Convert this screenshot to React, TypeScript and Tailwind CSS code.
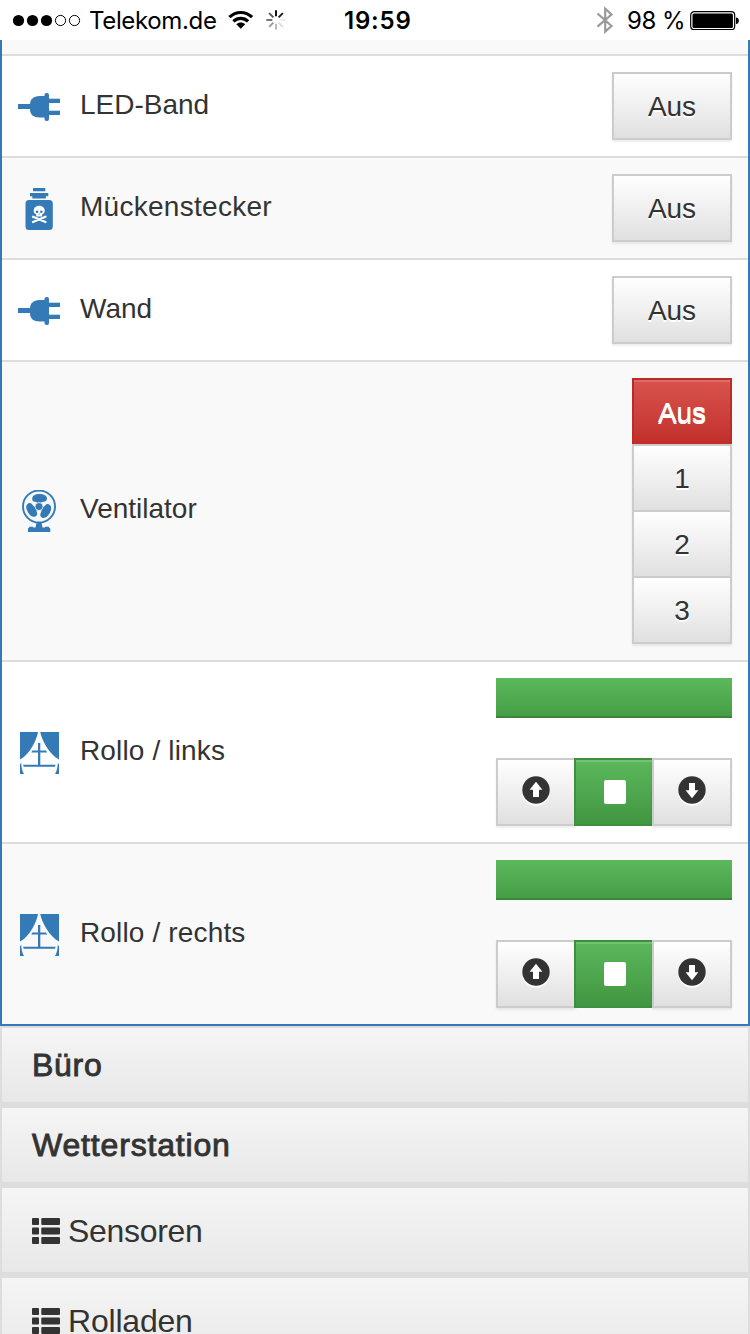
import type { ReactNode } from "react";

const helv = "font-['Liberation_Sans',Arial,sans-serif]";

function PlugIcon() {
  return (
    <svg viewBox="0 0 42 42" className="size-[42px] shrink-0 fill-[#337ab7]">
      <rect x="0" y="18" width="14" height="5" />
      <path d="M27 10H21.500C15.500 10 12 13.500 12 18.500V23.500C12 28.500 15.500 31.500 21.500 31.500H27Z" />
      <rect x="26.500" y="7" width="4.500" height="28" rx="2" />
      <rect x="30" y="12.700" width="12" height="4.300" />
      <rect x="30" y="24.700" width="12" height="4.300" />
    </svg>
  );
}

function PoisonIcon() {
  return (
    <svg viewBox="0 0 42 42" className="size-[42px] shrink-0 fill-[#337ab7]">
      <rect x="15" y="0" width="12.300" height="3.300" rx=".5" />
      <path d="M12 5H30.300V8.300H27.800V10.500H14.300V8.300H12Z" />
      <rect x="7.500" y="12" width="27.300" height="30" rx="3.500" />
      <g stroke="#fff" strokeWidth="2.300" strokeLinecap="round">
        <path d="M15 28.700L27.500 34M27.500 28.700L15 34" />
      </g>
      <path fill="#fff" d="M21.200 17.800C17.500 17.800 15.700 20.200 15.700 22.800C15.700 24.700 16.500 25.700 18.200 26.300V28.500H24.200V26.300C25.900 25.700 26.700 24.700 26.700 22.800C26.700 20.200 24.900 17.800 21.200 17.800Z" />
      <circle cx="19.100" cy="23.800" r="1.300" />
      <circle cx="23.300" cy="23.800" r="1.300" />
      <path d="M21.200 25L21.900 26.500H20.500Z" />
    </svg>
  );
}

function FanIcon() {
  const blade = "M19.500 14C19.300 12.300 18.600 12.100 17 11.800C15 11.400 13.900 10.200 14.200 8.200C14.600 5.200 18 4 21.500 4C25.800 4 29 5.600 29 8.600C29 10.800 27.500 11.600 25.500 11.800C23.500 12 22.700 12.500 22.500 14Z";
  return (
    <svg viewBox="0 0 42 42" className="size-[42px] shrink-0 fill-[#337ab7]">
      <circle cx="21" cy="16.500" r="16" fill="none" stroke="#337ab7" strokeWidth="1.900" />
      <path d={blade} />
      <path d={blade} transform="rotate(120 21 16.500)" />
      <path d={blade} transform="rotate(240 21 16.500)" />
      <circle cx="21" cy="16.500" r="4" stroke="#f9f9f9" strokeWidth=".8" />
      <path d="M18.500 32.500H23.500L24.500 37.500H27V36.800H31V37.800Q32.300 37.800 32.300 39V42H10V39Q10 37.800 11.200 37.800V36.800H15V37.500H17.500Z" />
    </svg>
  );
}

function CurtainIcon() {
  return (
    <svg viewBox="0 0 42 42" className="size-[42px] shrink-0 fill-[#337ab7]">
      <path d="M2 0H20C19 7 12 22.500 2 27.500Z" />
      <path d="M41 0H22.300C23.300 7 31 22.500 41 27.500Z" />
      <path d="M20 11H22.300V18.500H28L29.200 20.500H22.300V32.800H37.600L37 34.800H5.800L5 32.800H20V20.500H13.200L14.400 18.500H20Z" />
      <path d="M2 32C3.500 31.500 4 30.500 3.200 30.500C3.400 35.500 4 38.500 6 42H2ZM41 32C39.500 31.500 39 30.500 39.800 30.500C39.600 35.500 39 38.500 37 42H41Z" />
    </svg>
  );
}

function ArrowIcon({ down = false }: { down?: boolean }) {
  return (
    <svg viewBox="0 0 28 30" className="h-[30px] w-7">
      <circle cx="14" cy="16" r="13.700" fill="#fff" />
      <circle cx="14" cy="14" r="13.700" fill="#333" />
      <path
        fill="#fff"
        d="M14 5.800L20.400 13.800H17V21H11V13.800H7.600Z"
        transform={down ? "rotate(180 14 14)" : undefined}
      />
    </svg>
  );
}

function ListIcon() {
  return (
    <svg viewBox="0 0 28 26" className="h-[26px] w-7 shrink-0 fill-[#333]">
      {[0, 9.5, 19].map((y) => (
        <g key={y}>
          <rect x="0" y={y} width="7" height="7" rx="1" />
          <rect x="9.300" y={y} width="18.700" height="7" rx="1" />
        </g>
      ))}
    </svg>
  );
}

const plain =
  "border-2 border-[#ccc] bg-linear-to-b from-white to-[#e0e0e0] text-[#333] [text-shadow:0_2px_0_#fff] shadow-[inset_0_2px_0_rgba(255,255,255,0.15),0_2px_2px_rgba(0,0,0,0.075)]";

function AusButton() {
  return (
    <button className={`h-[68px] w-[120px] text-[28px] leading-[40px] tracking-[-0.1px] ${plain}`}>
      <span className="block pt-[1px]">Aus</span>
    </button>
  );
}

function SpeedButtons() {
  return (
    <div className="flex w-[100px] flex-col text-[28px] leading-[40px]">
      <button className="h-[68px] border-2 border-[#b92c28] bg-linear-to-b from-[#d9534f] to-[#c12e2a] text-white [text-shadow:0_2px_0_#fff] shadow-[inset_0_2px_0_rgba(255,255,255,0.15)]">
        <span className="block pt-[2px]">Aus</span>
      </button>
      {["1", "2", "3"].map((n) => (
        <button key={n} className={`-mt-0.5 h-[68px] ${plain}`}>
          <span className="block pt-[2px]">{n}</span>
        </button>
      ))}
    </div>
  );
}

function ShutterControl() {
  return (
    <div className="flex w-[236px] flex-col gap-10">
      <div className="h-10 bg-linear-to-b from-[#5cb85c] to-[#449d44] shadow-[inset_0_-2px_0_rgba(0,0,0,0.15)]" />
      <div className="flex">
        <button className={`flex h-[68px] w-20 justify-center pt-4 ${plain}`}>
          <ArrowIcon />
        </button>
        <button className="-ml-0.5 flex h-[68px] w-20 justify-center border-2 border-[#3e8f3e] bg-linear-to-b from-[#5cb85c] to-[#419641] pt-5 pl-0.5 shadow-[inset_0_2px_0_rgba(255,255,255,0.15)]">
          <span className="h-6 w-[22px] rounded-[2px] bg-white" />
        </button>
        <button className={`-ml-0.5 flex h-[68px] w-20 justify-center pt-4 ${plain}`}>
          <ArrowIcon down />
        </button>
      </div>
    </div>
  );
}

type RowProps = { icon: ReactNode; label: string; size: string; pad: string; tracking?: string; shade?: boolean; children: ReactNode };

function Row({ icon, label, size, pad, tracking = "", shade, children }: RowProps) {
  return (
    <div className={`flex items-start justify-between border-t-2 border-[#ddd] pr-4 pl-4 ${size} ${shade ? "bg-[#f9f9f9]" : "bg-white"}`}>
      <div className={`flex gap-5 ${pad}`}>
        {icon}
        <span className={`text-[28px] leading-[38px] whitespace-nowrap ${tracking}`}>{label}</span>
      </div>
      <div className="pt-4">{children}</div>
    </div>
  );
}

function StatusBar() {
  return (
    <header className="flex h-10 shrink-0 items-center bg-white font-[Inter,sans-serif] text-[24px] leading-[38px] text-black">
      <svg viewBox="0 0 70 14" className="ml-3 h-3.5 w-[70px] shrink-0">
        {[0, 1, 2, 3, 4].map((i) => (
          <circle key={i} cx={6.5 + i * 14} cy="7.500" r={i < 3 ? 5.6 : 5.1} fill={i < 3 ? "#000" : "none"} stroke="#000" strokeWidth={i < 3 ? 0 : 1} />
        ))}
      </svg>
      <span className="ml-[7px] w-[139px] pt-0.5 whitespace-nowrap tracking-[-0.35px]">Telekom.de</span>
      <svg viewBox="0 0 26 20" className="h-5 w-[26px] shrink-0">
        <g fill="none" stroke="#000" strokeWidth="3.200">
          <path d="M1.400 7.200C8 .900 17.500 .900 24.100 7.200" />
          <path d="M5.400 11.300C9.700 7.300 15.800 7.300 20.100 11.300" />
        </g>
        <path d="M8.300 14.200C10.800 11.900 14.700 11.900 17.200 14.200L12.750 18.700Z" />
      </svg>
      <svg viewBox="0 0 20 20" className="ml-[12px] h-5 w-5 shrink-0">
        {["#111", "#222", "#eee", "#ddd", "#bbb", "#999", "#777", "#555"].map((c, i) => (
          <path key={i} d="M10 .300V6.300" stroke={c} strokeWidth="2" transform={`rotate(${i * 45} 10 10)`} />
        ))}
      </svg>
      <span className="ml-[58px] w-[68px] pt-0.5 font-semibold tracking-[0.8px] whitespace-nowrap">19:59</span>
      <svg viewBox="0 0 18 28" className="ml-[184px] h-7 w-[18px] shrink-0" fill="none" stroke="#999" strokeWidth="2.200">
        <path d="M1.500 7.500L15.500 20L9.200 25.600V2.700L15.500 8.500L1.500 20.700" />
      </svg>
      <span className="ml-[13px] w-[63px] pt-0.5 tracking-[-0.5px] whitespace-nowrap">98 %</span>
      <svg viewBox="0 0 50 20" className="h-5 w-[50px] shrink-0">
        <rect x=".700" y="1.700" width="44" height="18" rx="3.500" fill="none" stroke="#000" strokeWidth="1.200" />
        <rect x="2.500" y="3.400" width="40.400" height="14.600" rx="1.500" />
        <path d="M46 7.500C49.800 7.800 49.800 13.700 46 14Z" />
      </svg>
    </header>
  );
}

function Section({ label, height, list, tracking }: { label: string; height: string; list?: boolean; tracking: string }) {
  return (
    <div className={`shrink-0 border-2 border-[#ddd] bg-linear-to-b from-[#f5f5f5] to-[#e8e8e8] ${height}`}>
      <div className={`flex pl-[30px] ${list ? "gap-2 pt-[25px]" : "pt-[19px]"}`}>
        {list && (
          <div className="pt-[5px]">
            <ListIcon />
          </div>
        )}
        <span className={`text-[32px] leading-9 whitespace-nowrap ${tracking} ${list ? "" : "[-webkit-text-stroke:0.9px_#333]"}`}>{label}</span>
      </div>
    </div>
  );
}

export default function App() {
  return (
    <div className={`flex h-[1334px] w-[750px] flex-col overflow-hidden bg-[#ddd] text-[#333] ${helv}`}>
      <StatusBar />
      <main className="shrink-0 border-x-2 border-b-2 border-[#337ab7]">
        <div className="h-3.5 bg-[#f9f9f9]" />
        <Row icon={<PlugIcon />} label="LED-Band" size="h-[102px]" pad="pt-[30px]">
          <AusButton />
        </Row>
        <Row icon={<PoisonIcon />} label="Mückenstecker" size="h-[102px]" pad="pt-[30px]" tracking="tracking-[0.28px]" shade>
          <AusButton />
        </Row>
        <Row icon={<PlugIcon />} label="Wand" size="h-[102px]" pad="pt-[30px]">
          <AusButton />
        </Row>
        <Row icon={<FanIcon />} label="Ventilator" size="h-[300px]" pad="pt-[128px]" shade>
          <SpeedButtons />
        </Row>
        <Row icon={<CurtainIcon />} label="Rollo / links" size="h-[182px]" pad="pt-[70px]" tracking="tracking-[0.15px]">
          <ShutterControl />
        </Row>
        <Row icon={<CurtainIcon />} label="Rollo / rechts" size="h-[182px]" pad="pt-[70px]" tracking="tracking-[0.15px]" shade>
          <ShutterControl />
        </Row>
      </main>
      <div className="flex flex-col gap-0.5">
        <Section label="Büro" height="h-[78px]" tracking="tracking-[0.7px]" />
        <Section label="Wetterstation" height="h-[78px]" tracking="tracking-[0.83px]" />
        <Section label="Sensoren" height="h-[88px]" tracking="tracking-[-0.3px]" list />
        <Section label="Rolladen" height="h-[88px]" tracking="tracking-[-0.2px]" list />
      </div>
    </div>
  );
}
